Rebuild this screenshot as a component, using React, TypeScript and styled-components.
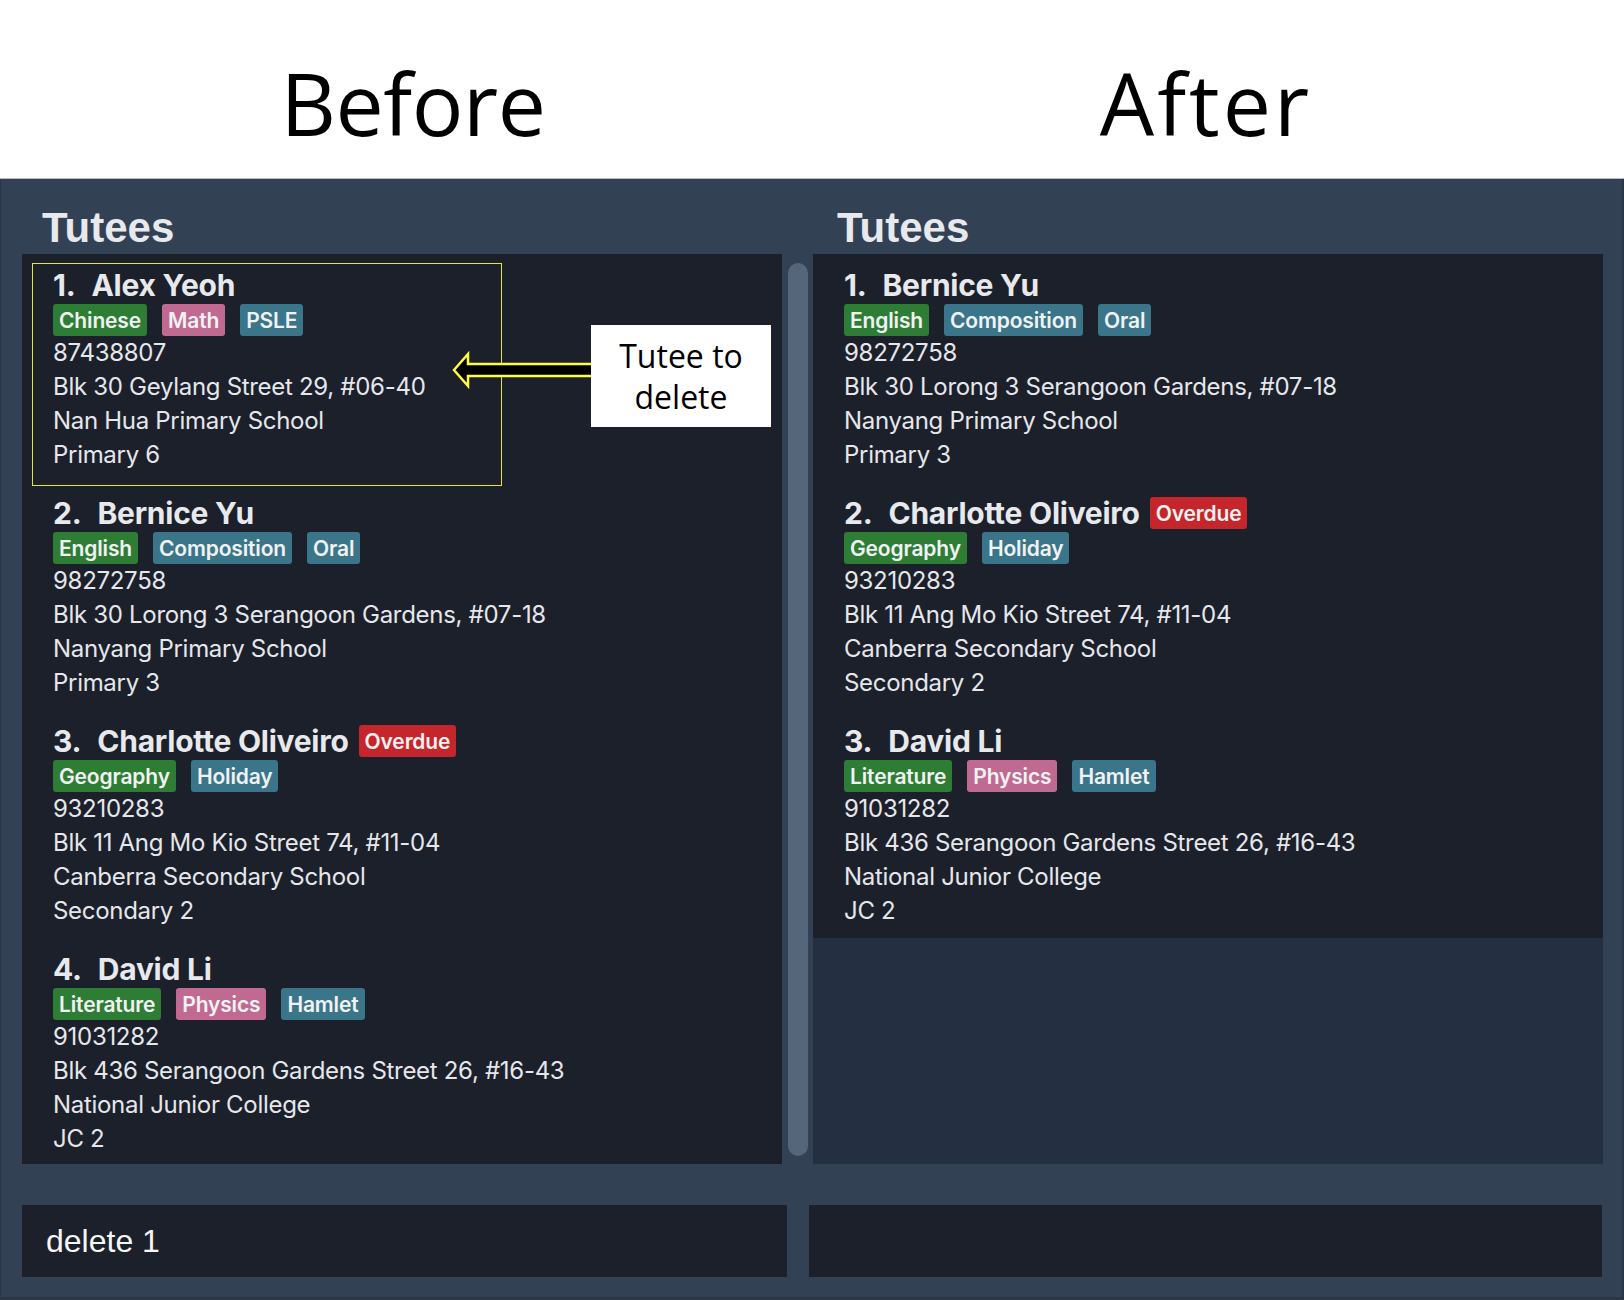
import React from "react";
import styled, { createGlobalStyle } from "styled-components";

const GlobalStyle = createGlobalStyle`
  html, body { margin: 0; padding: 0; background: #ffffff; }
  body { font-family: Inter, "Liberation Sans", sans-serif; }
  * { box-sizing: border-box; }
`;

const Page = styled.div`
  width: 1624px;
  height: 1300px;
  display: flex;
  flex-direction: column;
  overflow: hidden;
`;

const Header = styled.header`
  height: 179px;
  display: grid;
  grid-template-columns: 826px 760px 1fr;
  background: #ffffff;
  border-bottom: 1px solid #b7bcc4;
`;

const Title = styled.h1<{ $spacing: number }>`
  margin: 0;
  padding-top: 60px;
  font-family: "Open Sans", "Noto Sans", sans-serif;
  font-weight: 400;
  font-size: 86px;
  line-height: 1;
  letter-spacing: ${(p) => p.$spacing}px;
  color: #000000;
  text-align: center;
`;

const Main = styled.main`
  flex: 1;
  display: grid;
  grid-template-columns: 808px 816px;
  background: #334155;
  border-bottom: 3px solid #2a3546;
`;

const Panel = styled.section<{ $edge?: boolean }>`
  position: relative;
  display: flex;
  flex-direction: column;
  padding-top: 28px;
  padding-bottom: 20px;
  border-left: ${(p) => (p.$edge ? "1px solid #2a3546" : "none")};
  border-right: ${(p) => (p.$edge ? "none" : "2px solid #2a3546")};
`;

const Heading = styled.h2<{ $indent: number }>`
  margin: 0 0 0 ${(p) => p.$indent}px;
  height: 42px;
  font-family: "Liberation Sans", Arial, sans-serif;
  font-weight: 700;
  font-size: 42px;
  line-height: 42px;
  color: #e8e9ec;
`;

const ListRow = styled.div`
  display: flex;
  height: 910px;
  margin-top: 5px;
`;

const List = styled.div<{ $indent: number; $width: number }>`
  margin-left: ${(p) => p.$indent}px;
  width: ${(p) => p.$width}px;
  height: 100%;
  background: #242f42;
  overflow: hidden;
`;

const Card = styled.div`
  position: relative;
  height: 228px;
  padding: 13px 0 10px 31px;
  background: #1b202b;
  color: #e6e7eb;
`;

const NameRow = styled.div`
  display: flex;
  align-items: center;
  gap: 10px;
  height: 36px;
`;

const Name = styled.div`
  font-size: 30px;
  font-weight: 700;
  line-height: 36px;
  letter-spacing: -0.25px;
  color: #e8e9ec;
  white-space: nowrap;
`;

const Index = styled.span`
  display: inline-block;
  margin-right: 16px;
`;

const TagRow = styled.div`
  display: flex;
  gap: 15px;
  height: 32px;
  margin-top: 1px;
`;

const Tag = styled.span<{ $bg: string }>`
  display: inline-flex;
  align-items: center;
  height: 32px;
  padding: 0 6px;
  border-radius: 3px;
  background: ${(p) => p.$bg};
  font-size: 21px;
  font-weight: 600;
  letter-spacing: -0.15px;
  color: #f1f2f3;
  white-space: nowrap;
`;

const Line = styled.div`
  font-size: 24px;
  line-height: 34px;
  letter-spacing: -0.3px;
  white-space: nowrap;
`;

const Scrollbar = styled.div`
  width: 20px;
  margin-left: 6px;
  padding: 9px 0 8px;
  display: flex;
`;

const Thumb = styled.div`
  flex: 1;
  border-radius: 10px;
  background: #55657a;
`;

const Command = styled.div<{ $indent: number; $width: number }>`
  margin-top: 41px;
  margin-left: ${(p) => p.$indent}px;
  width: ${(p) => p.$width}px;
  height: 72px;
  display: flex;
  align-items: center;
  padding-left: 24px;
  padding-top: 1px;
  background: #1b202b;
  font-family: "Liberation Sans", Arial, sans-serif;
  font-size: 32px;
  color: #f6f6f6;
`;

const Highlight = styled.div`
  position: absolute;
  left: 10px;
  top: 9px;
  width: 470px;
  height: 223px;
  border: 1.5px solid #e4e43e;
  z-index: 1;
  pointer-events: none;
`;

const Callout = styled.div`
  position: absolute;
  left: 450px;
  top: 146px;
  display: flex;
  align-items: flex-start;
  z-index: 2;
`;

const ArrowSvg = styled.svg`
  display: block;
  margin-top: 25px;
`;

const Label = styled.div`
  width: 180px;
  height: 102px;
  display: flex;
  flex-direction: column;
  justify-content: center;
  align-items: center;
  background: #ffffff;
  font-family: "Open Sans", "Noto Sans", sans-serif;
  font-size: 32px;
  line-height: 41px;
  color: #000000;
`;

const GREEN = "#2e7d35";
const PINK = "#c06a91";
const TEAL = "#3a758a";
const RED = "#c5262b";

type TagT = { label: string; color: string };
type Tutee = {
  name: string;
  overdue?: boolean;
  tags: TagT[];
  phone: string;
  address: string;
  school: string;
  level: string;
};

const alex: Tutee = {
  name: "Alex Yeoh",
  tags: [
    { label: "Chinese", color: GREEN },
    { label: "Math", color: PINK },
    { label: "PSLE", color: TEAL },
  ],
  phone: "87438807",
  address: "Blk 30 Geylang Street 29, #06-40",
  school: "Nan Hua Primary School",
  level: "Primary 6",
};

const bernice: Tutee = {
  name: "Bernice Yu",
  tags: [
    { label: "English", color: GREEN },
    { label: "Composition", color: TEAL },
    { label: "Oral", color: TEAL },
  ],
  phone: "98272758",
  address: "Blk 30 Lorong 3 Serangoon Gardens, #07-18",
  school: "Nanyang Primary School",
  level: "Primary 3",
};

const charlotte: Tutee = {
  name: "Charlotte Oliveiro",
  overdue: true,
  tags: [
    { label: "Geography", color: GREEN },
    { label: "Holiday", color: TEAL },
  ],
  phone: "93210283",
  address: "Blk 11 Ang Mo Kio Street 74, #11-04",
  school: "Canberra Secondary School",
  level: "Secondary 2",
};

const david: Tutee = {
  name: "David Li",
  tags: [
    { label: "Literature", color: GREEN },
    { label: "Physics", color: PINK },
    { label: "Hamlet", color: TEAL },
  ],
  phone: "91031282",
  address: "Blk 436 Serangoon Gardens Street 26, #16-43",
  school: "National Junior College",
  level: "JC 2",
};

function TuteeCard({ t, index, highlighted }: { t: Tutee; index: number; highlighted?: boolean }) {
  return (
    <Card>
      {highlighted && <Highlight />}
      <NameRow>
        <Name>
          <Index>{index}.</Index>
          {t.name}
        </Name>
        {t.overdue && <Tag $bg={RED}>Overdue</Tag>}
      </NameRow>
      <TagRow>
        {t.tags.map((tg) => (
          <Tag key={tg.label} $bg={tg.color}>
            {tg.label}
          </Tag>
        ))}
      </TagRow>
      <Line>{t.phone}</Line>
      <Line>{t.address}</Line>
      <Line>{t.school}</Line>
      <Line>{t.level}</Line>
    </Card>
  );
}

export default function App() {
  const before = [alex, bernice, charlotte, david];
  const after = [bernice, charlotte, david];
  return (
    <>
      <GlobalStyle />
      <Page>
        <Header>
          <Title $spacing={-0.5}>Before</Title>
          <Title $spacing={3}>After</Title>
        </Header>
        <Main>
          <Panel $edge>
            <Heading $indent={41}>Tutees</Heading>
            <ListRow>
              <List $indent={21} $width={760}>
                {before.map((t, i) => (
                  <TuteeCard key={t.name} t={t} index={i + 1} highlighted={i === 0} />
                ))}
              </List>
              <Scrollbar>
                <Thumb />
              </Scrollbar>
            </ListRow>
            <Command $indent={21} $width={765}>delete 1</Command>
            <Callout>
              <ArrowSvg width="140" height="40" viewBox="0 0 140 40">
                <polygon
                  points="3,20 17,4 17,14 142,14 142,26 17,26 17,36"
                  fill="#000000"
                  stroke="#ffff3a"
                  strokeWidth="2.5"
                  strokeLinejoin="miter"
                />
              </ArrowSvg>
              <Label>
                <span>Tutee to</span>
                <span>delete</span>
              </Label>
            </Callout>
          </Panel>
          <Panel>
            <Heading $indent={29}>Tutees</Heading>
            <ListRow>
              <List $indent={5} $width={790}>
                {after.map((t, i) => (
                  <TuteeCard key={t.name} t={t} index={i + 1} />
                ))}
              </List>
            </ListRow>
            <Command $indent={1} $width={793} />
          </Panel>
        </Main>
      </Page>
    </>
  );
}
